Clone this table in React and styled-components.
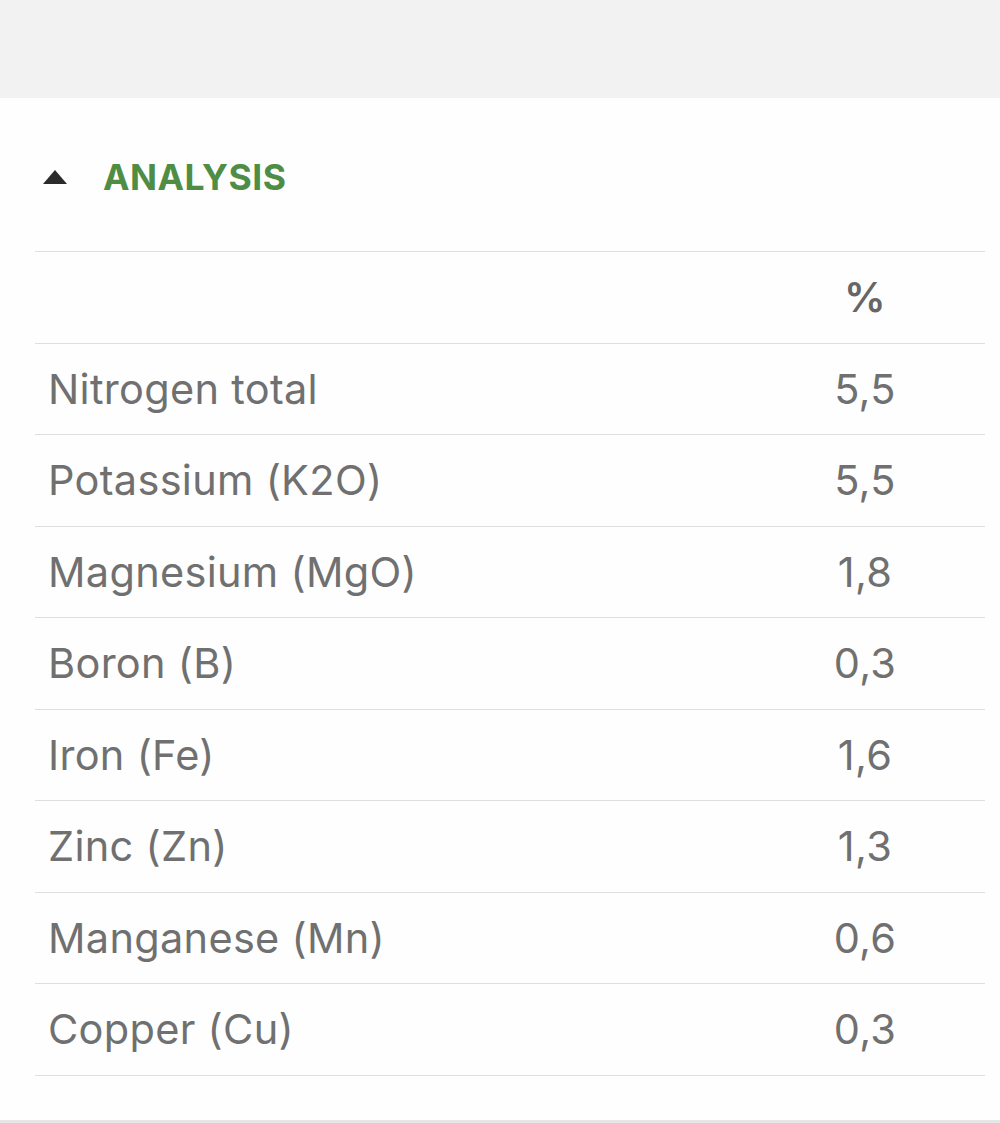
import styled, { createGlobalStyle } from "styled-components";

const GlobalStyle = createGlobalStyle`
    body {
        margin: 0;
        background: #ffffff;
        font-family: Inter, "Noto Sans", sans-serif;
    }
`

const TopBand = styled.div`
    height: 98px;
    background: #f2f2f2;
`

const Panel = styled.section`
    background: #fefefe;
    padding: 0 15px 44px 35px;
    border-bottom: 5px solid #e6e6e6;
`

const SectionHeader = styled.div`
    display: flex;
    align-items: center;
    gap: 36px;
    height: 153px;
    padding: 6px 0 0 8px;
    box-sizing: border-box;
`

const Caret = styled.span`
    width: 0;
    height: 0;
    border-left: 12.5px solid transparent;
    border-right: 12.5px solid transparent;
    border-bottom: 14px solid #2b2b2b;
    margin-top: -2px;
`

const Title = styled.h2`
    margin: 0;
    font-size: 35.5px;
    font-weight: 700;
    color: #4f8d45;
    letter-spacing: 0.5px;
`

const Table = styled.div`
    border-top: 1px solid #dedede;
`

const Row = styled.div`
    display: grid;
    grid-template-columns: 1fr 240px;
    align-items: center;
    height: 90.5px;
    border-bottom: 1px solid #dedede;
    font-size: 41.5px;
    letter-spacing: 0.3px;
    color: ${props => props.$head ? '#666666' : '#707070'};
    font-weight: ${props => props.$head ? 600 : 400};
`

const Name = styled.div`
    padding-left: 13px;
`

const Value = styled.div`
    text-align: center;
`

const rows = [
    ['Nitrogen total', '5,5'],
    ['Potassium (K2O)', '5,5'],
    ['Magnesium (MgO)', '1,8'],
    ['Boron (B)', '0,3'],
    ['Iron (Fe)', '1,6'],
    ['Zinc (Zn)', '1,3'],
    ['Manganese (Mn)', '0,6'],
    ['Copper (Cu)', '0,3'],
]

export default function App() {
    return <>
        <GlobalStyle />
        <TopBand />
        <Panel>
            <SectionHeader>
                <Caret />
                <Title>ANALYSIS</Title>
            </SectionHeader>
            <Table>
                <Row $head>
                    <Name></Name>
                    <Value>%</Value>
                </Row>
                {rows.map(([name, value]) => {
                    return <Row key={name}>
                        <Name>{name}</Name>
                        <Value>{value}</Value>
                    </Row>
                })}
            </Table>
        </Panel>
    </>
}
